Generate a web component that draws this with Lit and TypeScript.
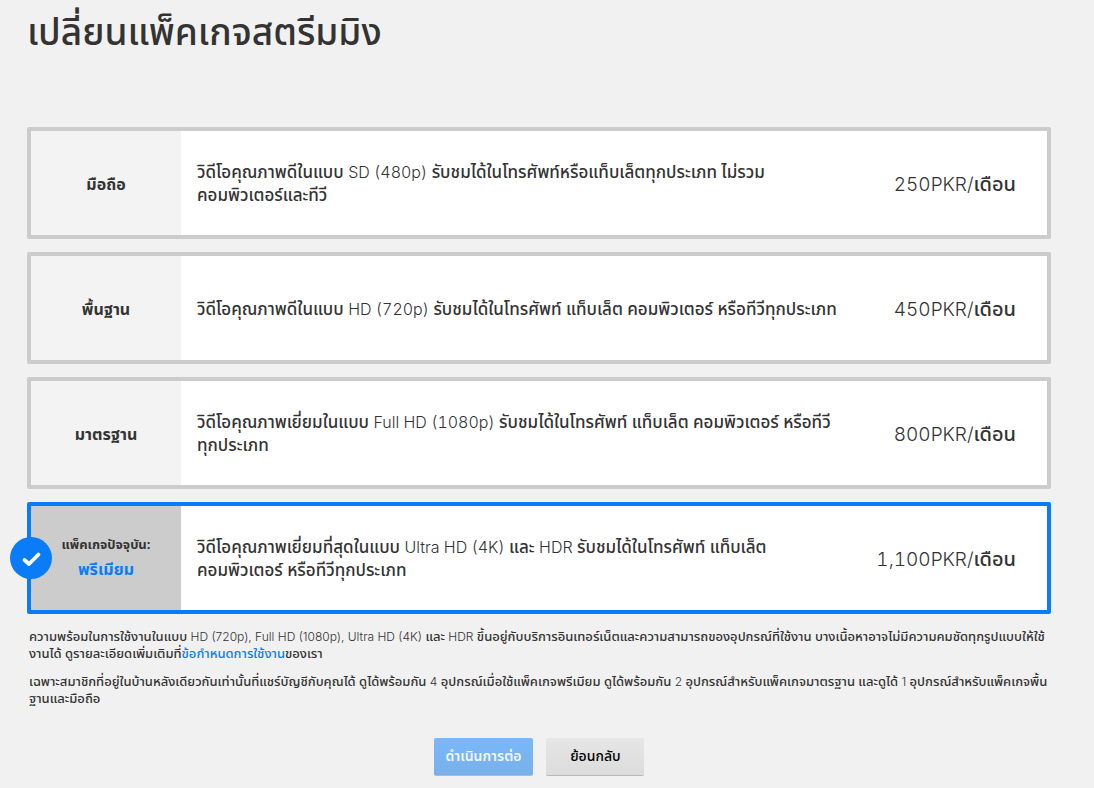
import { LitElement, html, css, nothing } from "lit";
import { customElement, state } from "lit/decorators.js";
import { classMap } from "lit/directives/class-map.js";

interface Plan {
  id: string;
  name: string;
  lines: string[];
  price: string;
}

const PLANS: Plan[] = [
  {
    id: "mobile",
    name: "มือถือ",
    lines: ["วิดีโอคุณภาพดีในแบบ SD (480p) รับชมได้ในโทรศัพท์หรือแท็บเล็ตทุกประเภท ไม่รวม", "คอมพิวเตอร์และทีวี"],
    price: "250PKR/เดือน",
  },
  {
    id: "basic",
    name: "พื้นฐาน",
    lines: ["วิดีโอคุณภาพดีในแบบ HD (720p) รับชมได้ในโทรศัพท์ แท็บเล็ต คอมพิวเตอร์ หรือทีวีทุกประเภท"],
    price: "450PKR/เดือน",
  },
  {
    id: "standard",
    name: "มาตรฐาน",
    lines: ["วิดีโอคุณภาพเยี่ยมในแบบ Full HD (1080p) รับชมได้ในโทรศัพท์ แท็บเล็ต คอมพิวเตอร์ หรือทีวี", "ทุกประเภท"],
    price: "800PKR/เดือน",
  },
  {
    id: "premium",
    name: "พรีเมียม",
    lines: ["วิดีโอคุณภาพเยี่ยมที่สุดในแบบ Ultra HD (4K) และ HDR รับชมได้ในโทรศัพท์ แท็บเล็ต", "คอมพิวเตอร์ หรือทีวีทุกประเภท"],
    price: "1,100PKR/เดือน",
  },
];

const CURRENT_PLAN = "premium";

/** Sets the Latin words and digits of a Thai sentence in the light Latin face. */
function mixed(text: string) {
  return text
    .split(/([A-Za-z0-9(][A-Za-z0-9(),/ ]*[A-Za-z0-9),/]|[0-9])/)
    .map((part, i) => (i % 2 ? html`<span class="latin">${part}</span>` : part));
}

@customElement("app-root")
export class AppRoot extends LitElement {
  @state() private selected = CURRENT_PLAN;

  static styles = css`
    :host {
      display: block;
      box-sizing: border-box;
      min-height: 100vh;
      padding: 8px 43px 12px 27px;
      background: #f1f1f1;
      color: #333;
      font-family: "Noto Sans Thai", "Inter", sans-serif;
      font-size: 17px;
      line-height: 23px;
    }
    .latin {
      font-family: "Inter", sans-serif;
      font-weight: 300;
      font-size: 16px;
      font-variant-numeric: tabular-nums;
    }
    .title {
      margin: 0 0 67px;
      font-size: 37px;
      line-height: 52px;
      font-weight: 500;
    }
    .plans {
      display: flex;
      flex-direction: column;
      gap: 13px;
      margin: 0;
      padding: 0;
      border: 0;
    }
    .plan {
      position: relative;
      display: grid;
      grid-template-columns: 150px 1fr auto;
      min-height: 104px;
      border: 4px solid #ccc;
      border-radius: 2px;
      background: #fff;
      cursor: pointer;
    }
    .plan.selected {
      border-color: #0a7cf8;
    }
    .radio {
      position: absolute;
      opacity: 0;
      margin: 0;
    }
    .name {
      display: flex;
      flex-direction: column;
      align-items: center;
      justify-content: center;
      gap: 2px;
      padding-top: 4px;
      background: #f3f3f3;
      font-size: 16px;
      font-weight: 700;
    }
    .selected .name {
      padding-top: 0;
      background: #ccc;
      color: #0a7cf8;
    }
    .current {
      color: #333;
      font-size: 13px;
    }
    .description {
      align-self: center;
      padding: 3px 16px 0;
      font-weight: 500;
    }
    .line {
      display: block;
    }
    .price {
      align-self: center;
      padding: 3px 31px 0 0;
      font-size: 20px;
      font-weight: 500;
      white-space: nowrap;
    }
    .price .latin {
      font-size: 19px;
    }
    .badge {
      position: absolute;
      top: 50%;
      left: -21px;
      width: 42px;
      height: 42px;
      margin-top: -21px;
    }
    .notes {
      margin-top: 14px;
      padding-left: 2px;
      font-size: 13px;
      line-height: 17px;
      font-weight: 500;
    }
    .notes .latin {
      font-size: 12px;
      font-variant-numeric: normal;
    }
    .note {
      margin: 0 0 10px;
    }
    .link {
      color: #0a7cf8;
      text-decoration: none;
    }
    .actions {
      display: flex;
      justify-content: center;
      gap: 13px;
      margin-top: 30px;
    }
    .button {
      box-sizing: border-box;
      min-width: 98px;
      height: 38px;
      padding: 0 12px;
      border: 0;
      border-bottom: 1px solid #b9b9b9;
      border-radius: 2px;
      background: linear-gradient(#e6e6e6, #dcdcdc);
      color: #000;
      font: inherit;
      font-size: 14px;
      font-weight: 500;
    }
    .button.primary {
      background: linear-gradient(#7ab8f9, #79b0ea);
      color: #f1f7fe;
      font-weight: 600;
    }
  `;

  private renderPlan(plan: Plan) {
    const selected = plan.id === this.selected;
    return html`
      <label class=${classMap({ plan: true, selected })}>
        <input
          class="radio"
          type="radio"
          name="plan"
          .value=${plan.id}
          .checked=${selected}
          @change=${() => (this.selected = plan.id)}
        />
        <span class="name">
          ${plan.id === CURRENT_PLAN ? html`<span class="current">แพ็คเกจปัจจุบัน:</span>` : nothing}
          <span>${plan.name}</span>
        </span>
        <span class="description">${plan.lines.map((line) => html`<span class="line">${mixed(line)}</span>`)}</span>
        <span class="price">${mixed(plan.price)}</span>
        ${selected
          ? html`<svg class="badge" viewBox="0 0 42 42" aria-hidden="true">
              <circle cx="21" cy="21" r="21" fill="#0a7cf8" />
              <path d="M14.500 23l4.500 4L28.500 17.500" fill="none" stroke="#fff" stroke-width="3.800" stroke-linecap="round" stroke-linejoin="round" />
            </svg>`
          : nothing}
      </label>
    `;
  }

  render() {
    return html`
      <h1 class="title">เปลี่ยนแพ็คเกจสตรีมมิง</h1>
      <fieldset class="plans" aria-label="เปลี่ยนแพ็คเกจสตรีมมิง">${PLANS.map((plan) => this.renderPlan(plan))}</fieldset>
      <div class="notes">
        <p class="note">
          ${mixed(
            "ความพร้อมในการใช้งานในแบบ HD (720p), Full HD (1080p), Ultra HD (4K) และ HDR ขึ้นอยู่กับบริการอินเทอร์เน็ตและความสามารถของอุปกรณ์ที่ใช้งาน บางเนื้อหาอาจไม่มีความคมชัดทุกรูปแบบให้ใช้"
          )}<br />งานได้ ดูรายละเอียดเพิ่มเติมที่<a class="link" href="#terms">ข้อกำหนดการใช้งาน</a>ของเรา
        </p>
        <p class="note">
          ${mixed(
            "เฉพาะสมาชิกที่อยู่ในบ้านหลังเดียวกันเท่านั้นที่แชร์บัญชีกับคุณได้ ดูได้พร้อมกัน 4 อุปกรณ์เมื่อใช้แพ็คเกจพรีเมียม ดูได้พร้อมกัน 2 อุปกรณ์สำหรับแพ็คเกจมาตรฐาน และดูได้ 1 อุปกรณ์สำหรับแพ็คเกจพื้น"
          )}<br />ฐานและมือถือ
        </p>
      </div>
      <div class="actions">
        <button class="button primary" type="button">ดำเนินการต่อ</button>
        <button class="button" type="button">ย้อนกลับ</button>
      </div>
    `;
  }
}
